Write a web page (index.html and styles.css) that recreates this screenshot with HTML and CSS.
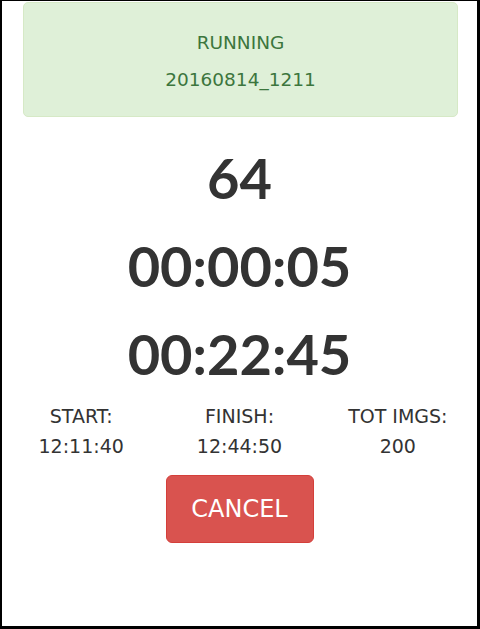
FILE: index.html
```html
<!DOCTYPE html>
<html>
<head>
<meta charset="utf-8">
<link rel="stylesheet" href="styles.css">
</head>
<body>
<div class="frame">
  <div class="alert">
    <div>RUNNING</div>
    <div>20160814_1211</div>
  </div>
  <div class="big">
    <div class="big-line">64</div>
    <div class="big-line">00:00:05</div>
    <div class="big-line">00:22:45</div>
  </div>
  <div class="stats">
    <div class="stat"><div>START:</div><div>12:11:40</div></div>
    <div class="stat"><div>FINISH:</div><div>12:44:50</div></div>
    <div class="stat"><div>TOT IMGS:</div><div>200</div></div>
  </div>
  <div class="actions">
    <button class="btn-cancel">CANCEL</button>
  </div>
</div>
</body>
</html>
```
FILE: styles.css
```css
html, body {
  margin: 0;
  padding: 0;
  background: #fff;
}
.frame {
  width: 480px;
  height: 629px;
  box-sizing: border-box;
  border-style: solid;
  border-color: #000;
  border-width: 1px 3px 3px 2px;
  background: #fff;
  font-family: "DejaVu Sans", Verdana, sans-serif;
  color: #333;
  overflow: hidden;
}
.alert {
  margin: 1px 19px 0 21px;
  height: 115px;
  box-sizing: border-box;
  padding: 21px 15px 20px;
  background: #dff0d8;
  border: 1px solid #d6e9c6;
  border-radius: 5px;
  color: #3c763d;
  font-size: 18.5px;
  line-height: 37px;
  text-align: center;
}
.big {
  margin-top: 17px;
  font-family: Lato, sans-serif;
  font-weight: 700;
  font-size: 56px;
  line-height: 88px;
  text-align: center;
  color: #333;
}
.stats {
  display: grid;
  grid-template-columns: 1fr 1fr 1fr;
  margin-top: 3px;
  font-size: 19px;
  line-height: 30px;
  text-align: center;
}
.actions {
  display: flex;
  justify-content: center;
  margin-top: 14px;
}
.btn-cancel {
  width: 148px;
  height: 68px;
  background: #d9534f;
  border: 1px solid #d43f3a;
  border-radius: 6px;
  color: #fff;
  font-family: "DejaVu Sans", Verdana, sans-serif;
  font-size: 24px;
  padding: 0;
}
```
